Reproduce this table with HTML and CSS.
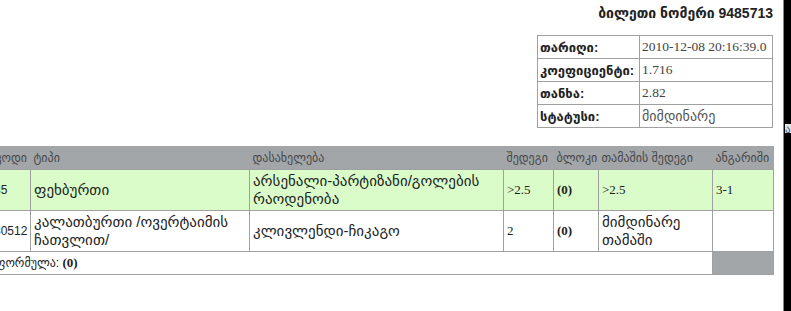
FILE: index.html
```html
<!DOCTYPE html>
<html lang="ka">
<head>
    <meta charset="UTF-8">
    <title>ბილეთი 9485713</title>
    <link rel="stylesheet" href="styles.css">
</head>
<body>

<div class="page">
    <div class="content">
        <h3 class="ticket-title">ბილეთი ნომერი 9485713</h3>

        <table class="info">
            <tr><th>თარიღი:</th><td class="num">2010-12-08 20:16:39.0</td></tr>
            <tr><th>კოეფიციენტი:</th><td class="num">1.716</td></tr>
            <tr><th>თანხა:</th><td class="num">2.82</td></tr>
            <tr><th>სტატუსი:</th><td>მიმდინარე</td></tr>
        </table>

        <table class="games">
            <colgroup>
                <col class="c-code">
                <col class="c-type">
                <col class="c-name">
                <col class="c-res">
                <col class="c-block">
                <col class="c-game">
                <col class="c-score">
            </colgroup>
            <thead>
                <tr>
                    <th>კოდი</th>
                    <th>ტიპი</th>
                    <th>დასახელება</th>
                    <th>შედეგი</th>
                    <th>ბლოკი</th>
                    <th>თამაშის შედეგი</th>
                    <th>ანგარიში</th>
                </tr>
            </thead>
            <tbody>
                <tr class="won">
                    <td class="code">35</td>
                    <td>ფეხბურთი</td>
                    <td>არსენალი-პარტიზანი/გოლების რაოდენობა</td>
                    <td class="num">&gt;2.5</td>
                    <td class="num"><b>(0)</b></td>
                    <td class="num">&gt;2.5</td>
                    <td class="num">3-1</td>
                </tr>
                <tr>
                    <td class="code">80512</td>
                    <td>კალათბურთი /ოვერტაიმის ჩათვლით/</td>
                    <td>კლივლენდი-ჩიკაგო</td>
                    <td class="num">2</td>
                    <td class="num"><b>(0)</b></td>
                    <td>მიმდინარე თამაში</td>
                    <td></td>
                </tr>
            </tbody>
            <tfoot>
                <tr>
                    <td colspan="6">ფორმულა: <b class="num">(0)</b></td>
                    <td class="blank"></td>
                </tr>
            </tfoot>
        </table>
    </div>

    <div class="side">
        <svg class="side-bg" width="8" height="311" viewBox="0 0 8 311">
            <rect x="0" y="0" width="8" height="311" fill="#000"/>
            <rect x="0" y="0" width="1" height="311" fill="#8a8a8a"/>
        </svg>
        <div class="side-tab">ა</div>
    </div>
</div>

</body>
</html>
```

FILE: styles.css
```css
html, body {
    margin: 0;
    background: #000;
}
body {
    font-family: "Liberation Sans", "DejaVu Sans", sans-serif;
    color: #222;
    overflow: hidden;
}
.page {
    display: grid;
    grid-template-columns: 783px 8px;
    height: 311px;
    background: #000;
}
.content {
    padding-right: 10px;
    background: #fff;
}
.ticket-title {
    margin: 5px 0 0;
    text-align: right;
    font-size: 14px;
    font-weight: bold;
    color: #222;
    line-height: 16px;
}
.num {
    font-family: "Liberation Serif", serif;
}

/* ticket info */
.info {
    margin: 14px 0 0 auto;
    border-collapse: collapse;
    width: 236px;
    font-size: 13px;
}
.info th, .info td {
    border: 1px solid #a0a0a0;
    height: 22px;
    padding: 0 2px;
    text-align: left;
    white-space: nowrap;
}
.info th {
    width: 97px;
    font-size: 13px;
}
.info td {
    font-size: 14px;
    color: #555;
}
.info td.num {
    font-size: 13.5px;
    color: #444;
}

/* games */
.games {
    margin: 18px 0 0 -8px;
    width: 781px;
    border-collapse: collapse;
    table-layout: fixed;
    font-size: 15px;
}
.c-code { width: 38px; }
.c-type { width: 219px; }
.c-name { width: 254px; }
.c-res { width: 50px; }
.c-block { width: 45px; }
.c-game { width: 114px; }
.c-score { width: 61px; }

.games th {
    background: #a2a6a9;
    color: #484848;
    font-weight: normal;
    font-size: 12px;
    text-align: left;
    height: 23px;
    padding: 0 3px;
    white-space: nowrap;
    overflow: hidden;
}
.games td {
    border: 1px solid #a0a0a0;
    padding: 1px 3px;
    height: 38px;
    line-height: 18px;
    color: #222;
}
.games td.code {
    font-size: 12px;
    padding-left: 1px;
}
.games td.num {
    font-size: 13px;
}
.games tr.won td {
    background: #dafcc9;
}
.games tfoot td {
    height: 20px;
    border-left: none;
    font-size: 12px;
}
.games tfoot td .num {
    font-size: 13px;
}
.games tfoot td.blank {
    background: #a2a6a9;
}

/* dark strip at the right edge */
.side {
    display: grid;
    background: #000;
    overflow: hidden;
}
.side-bg {
    grid-area: 1 / 1;
    display: block;
}
.side-tab {
    grid-area: 1 / 1;
    align-self: start;
    margin: 124px 0 0 2px;
    height: 9px;
    background: #e4e4e4;
    color: #3a5a9a;
    font-size: 11px;
    line-height: 10px;
    overflow: hidden;
}
```
